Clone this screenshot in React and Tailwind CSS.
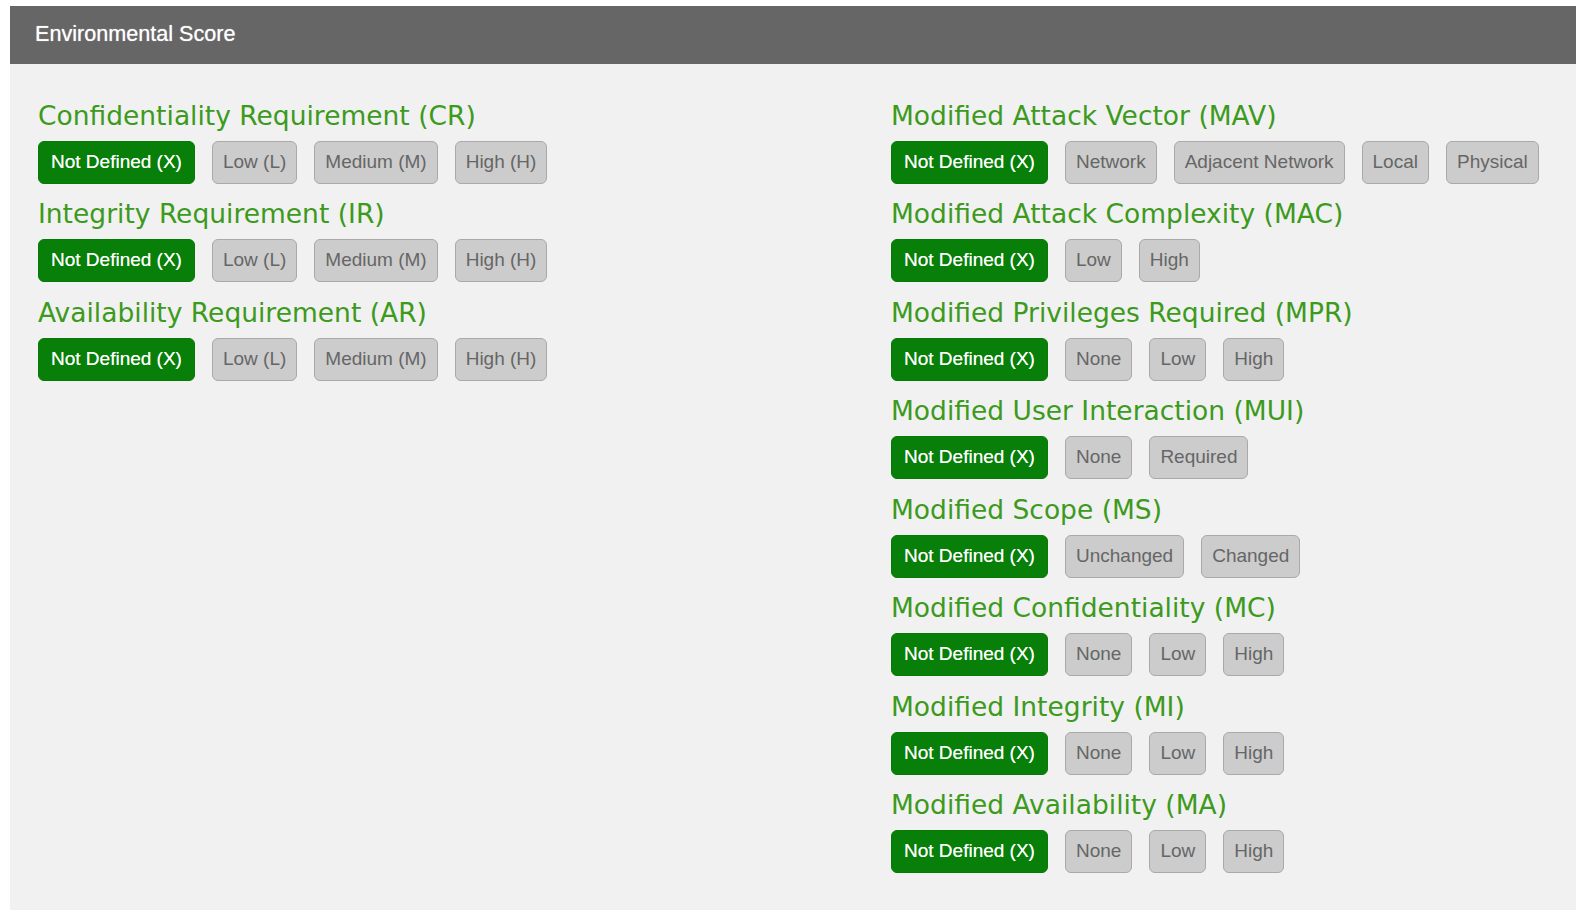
import React from "react";

const left = [
  { title: "Confidentiality Requirement (CR)", opts: ["Low (L)", "Medium (M)", "High (H)"] },
  { title: "Integrity Requirement (IR)", opts: ["Low (L)", "Medium (M)", "High (H)"] },
  { title: "Availability Requirement (AR)", opts: ["Low (L)", "Medium (M)", "High (H)"] },
];

const right = [
  { title: "Modified Attack Vector (MAV)", opts: ["Network", "Adjacent Network", "Local", "Physical"] },
  { title: "Modified Attack Complexity (MAC)", opts: ["Low", "High"] },
  { title: "Modified Privileges Required (MPR)", opts: ["None", "Low", "High"] },
  { title: "Modified User Interaction (MUI)", opts: ["None", "Required"] },
  { title: "Modified Scope (MS)", opts: ["Unchanged", "Changed"] },
  { title: "Modified Confidentiality (MC)", opts: ["None", "Low", "High"] },
  { title: "Modified Integrity (MI)", opts: ["None", "Low", "High"] },
  { title: "Modified Availability (MA)", opts: ["None", "Low", "High"] },
];

function Metric({ title, opts }) {
  return (
    <div className="mb-[15.5px]">
      <h3 className="h-[30px] leading-[30px] text-[26.5px] text-[#3c9a1c] font-['DejaVu_Sans',sans-serif] whitespace-nowrap">
        {title}
      </h3>
      <div className="mt-[10px] flex gap-[17px] font-['Liberation_Sans',Arial,sans-serif] text-[19px]">
        <button className="h-[43px] px-[12px] rounded-[6px] border border-[#067a06] bg-[#087f08] text-white whitespace-nowrap [text-shadow:0_0_0.5px_rgba(255,255,255,0.8)]">
          Not Defined (X)
        </button>
        {opts.map((o) => (
          <button
            key={o}
            className="h-[43px] px-[10px] rounded-[6px] border border-[#a9a9a9] bg-[#cccccc] text-[#666666] whitespace-nowrap"
          >
            {o}
          </button>
        ))}
      </div>
    </div>
  );
}

export default function App() {
  return (
    <div className="bg-white w-[1588px] h-[922px] pt-[6px] pl-[10px]">
      <div className="w-[1566px] h-[904px] bg-[#f1f1f1] flex flex-col">
        <div className="h-[58px] bg-[#666666] flex items-center pl-[25px] pb-[1px]">
          <span className="text-white text-[21.6px] font-['Liberation_Sans',Arial,sans-serif] [text-shadow:0_0_1px_rgba(255,255,255,0.7)]">
            Environmental Score
          </span>
        </div>
        <div className="grid grid-cols-[853px_1fr] pl-[28px] pt-[36.5px]">
          <div>
            {left.map((m) => (
              <Metric key={m.title} {...m} />
            ))}
          </div>
          <div>
            {right.map((m) => (
              <Metric key={m.title} {...m} />
            ))}
          </div>
        </div>
      </div>
    </div>
  );
}
